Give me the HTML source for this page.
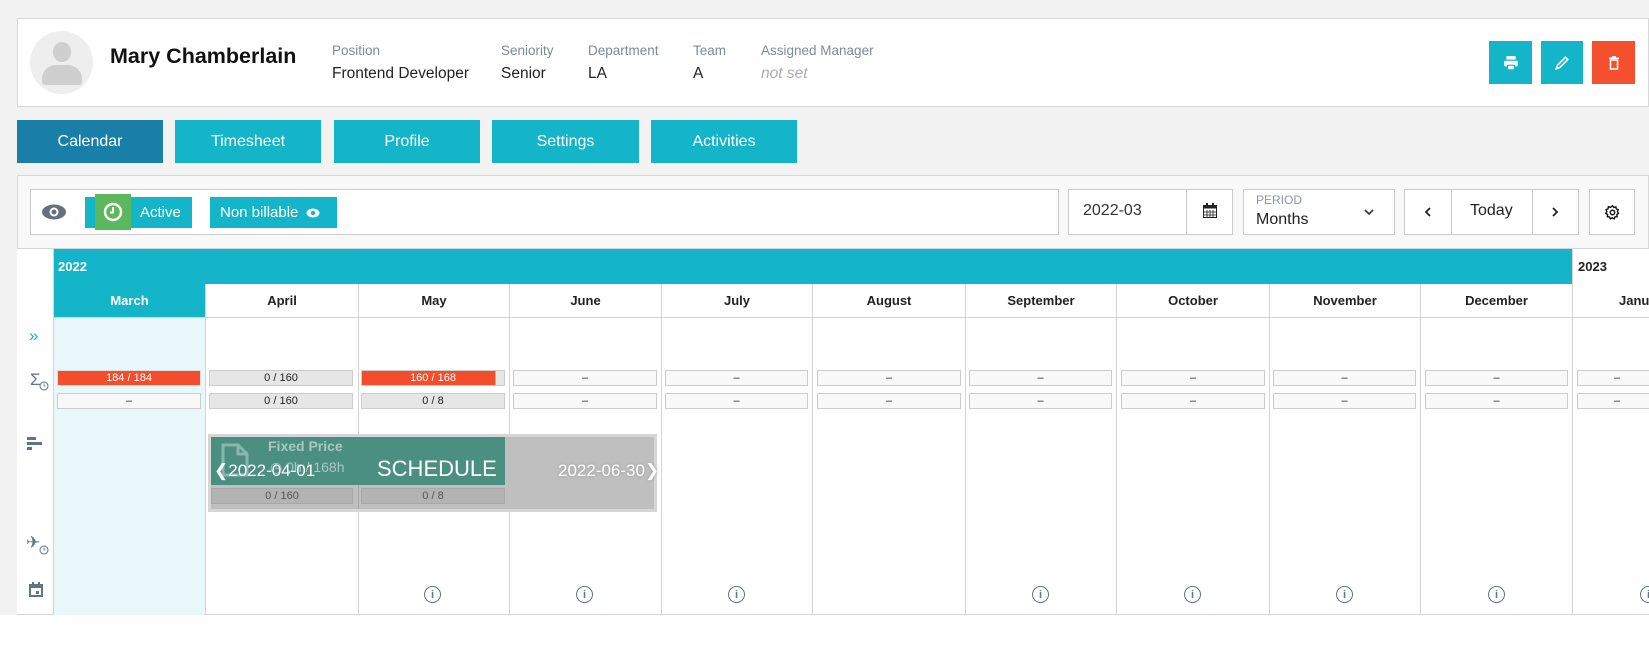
<!DOCTYPE html>
<html><head><meta charset="utf-8"><style>
*{box-sizing:border-box;margin:0;padding:0}
body{width:1649px;height:648px;background:#fff;font-family:"Liberation Sans",sans-serif;position:relative;overflow:hidden;color:#222}
.a{position:absolute}
.btn{position:absolute;color:#fff;font-size:16px;display:flex;align-items:center;justify-content:center;background:#14b5c9}
.lbl{font-size:13.5px;color:#7d8a99}
.val{font-size:15.5px;color:#222}
.box{position:absolute;background:#fff;border:1px solid #ccc}
.col{position:absolute;top:284px;height:331px;border-left:1px solid #d5d5d5}
.mh{position:absolute;top:284px;height:34px;font-size:13px;font-weight:bold;display:flex;align-items:center;justify-content:center;border-left:1px solid #d5d5d5;border-bottom:1px solid #d5d5d5;background:#fff}
.bar{position:absolute;height:16px;font-size:11px;display:flex;align-items:center;justify-content:center;border:1px solid #ccc;background:#f8f8f8;color:#222}
.g{background:#e6e6e6}
.r{background:#f44d2c;color:#fff;border-color:#ddd}
.info{position:absolute;top:586px;width:17px;height:17px;border:1.6px solid #5e7585;border-radius:50%;color:#5e7585;font-size:11px;font-weight:bold;display:flex;align-items:center;justify-content:center}
</style></head><body>
<div class="a" style="left:0;top:0;width:1649px;height:615px;background:#f2f2f2"></div>
<div class="a" style="left:17px;top:18px;width:1632px;height:89px;background:#fff;border:1px solid #d8d8d8"></div>
<div class="a" style="left:30px;top:31px;width:63px;height:63px;border-radius:50%;background:#eee;overflow:hidden">
<div class="a" style="left:23px;top:11px;width:18px;height:20px;border-radius:50%;background:#cfcfcf"></div>
<div class="a" style="left:12px;top:34px;width:40px;height:20px;border-radius:14px 14px 3px 3px;background:#cfcfcf"></div></div>
<div class="a" style="left:110px;top:44px;font-size:21.5px;font-weight:bold;color:#111">Mary Chamberlain</div>
<div class="a lbl" style="left:332px;top:43px">Position</div><div class="a val" style="left:332px;top:65px">Frontend Developer</div>
<div class="a lbl" style="left:501px;top:43px">Seniority</div><div class="a val" style="left:501px;top:65px">Senior</div>
<div class="a lbl" style="left:588px;top:43px">Department</div><div class="a val" style="left:588px;top:65px">LA</div>
<div class="a lbl" style="left:693px;top:43px">Team</div><div class="a val" style="left:693px;top:65px">A</div>
<div class="a lbl" style="left:761px;top:43px">Assigned Manager</div><div class="a val" style="left:761px;top:65px;color:#aab;font-style:italic">not set</div>
<div class="btn" style="left:1489px;top:41px;width:43px;height:43px"><svg width="16" height="16" viewBox="0 0 14 14"><rect x="3" y="1" width="8" height="3" fill="#fff"/><rect x="1" y="5" width="12" height="5" rx="1" fill="#fff"/><rect x="4" y="9" width="6" height="4" fill="#fff" stroke="#14b5c9" stroke-width="1"/></svg></div>
<div class="btn" style="left:1541px;top:41px;width:42px;height:43px"><svg width="16" height="16" viewBox="0 0 14 14"><path d="M2 12 L3 9 L10 2 L12 4 L5 11 Z" fill="none" stroke="#fff" stroke-width="1.4"/></svg></div>
<div class="btn" style="left:1592px;top:41px;width:43px;height:43px;background:#f4502e"><svg width="12" height="16" viewBox="0 0 12 14"><rect x="1" y="1.5" width="10" height="1.5" fill="#fff"/><rect x="4" y="0" width="4" height="1.5" fill="#fff"/><rect x="2.5" y="4" width="7" height="9" fill="none" stroke="#fff" stroke-width="1.5"/></svg></div>
<div class="btn" style="left:17px;top:120px;width:146px;height:43px;background:#1a7fa8">Calendar</div>
<div class="btn" style="left:175px;top:120px;width:146px;height:43px">Timesheet</div>
<div class="btn" style="left:334px;top:120px;width:146px;height:43px">Profile</div>
<div class="btn" style="left:492px;top:120px;width:147px;height:43px">Settings</div>
<div class="btn" style="left:651px;top:120px;width:146px;height:43px">Activities</div>
<div class="a" style="left:17px;top:175px;width:1632px;height:440px;background:#f8f8f8;border:1px solid #d8d8d8"></div>
<div class="box" style="left:30px;top:189px;width:1029px;height:46px"></div>
<svg class="a" style="left:41px;top:204px" width="26" height="16" viewBox="0 0 26 16"><ellipse cx="13" cy="8" rx="12" ry="7.5" fill="#66717d"/><circle cx="13" cy="8" r="4.5" fill="#fff"/><circle cx="13" cy="8" r="2.5" fill="#66717d"/></svg>
<div class="btn" style="left:85px;top:197px;width:107px;height:31px;justify-content:flex-start;padding-left:55px;font-size:15px">Active</div>
<div class="a" style="left:95px;top:194px;width:36px;height:36px;background:#5cb85c;display:flex;align-items:center;justify-content:center"><svg width="20" height="20" viewBox="0 0 20 20"><circle cx="10" cy="10" r="8" fill="none" stroke="#fff" stroke-width="2.4"/><path d="M10 5V10.5H7" fill="none" stroke="#fff" stroke-width="2"/></svg></div>
<div class="btn" style="left:210px;top:197px;width:127px;height:31px;font-size:15px;justify-content:flex-start;padding-left:10px">Non billable<svg style="margin-left:8px" width="14" height="10" viewBox="0 0 14 10"><ellipse cx="7" cy="5" rx="6.5" ry="4.5" fill="#fff"/><circle cx="7" cy="5" r="2.2" fill="#14b5c9"/></svg></div>
<div class="box" style="left:1068px;top:189px;width:165px;height:46px"></div>
<div class="a" style="left:1186px;top:189px;width:1px;height:46px;background:#ccc"></div>
<div class="a" style="left:1083px;top:202px;font-size:16px;color:#333">2022-03</div>
<svg class="a" style="left:1203px;top:203px" width="14" height="15" viewBox="0 0 14 15"><rect x="0.5" y="2.5" width="13" height="12" fill="none" stroke="#222"/><rect x="0.5" y="2.5" width="13" height="3" fill="#222"/><path d="M4 7V14M7 7V14M10 7V14M1 9H13M1 12H13" stroke="#222" stroke-width="0.8"/><rect x="3" y="0" width="2" height="4" fill="#222"/><rect x="9" y="0" width="2" height="4" fill="#222"/></svg>
<div class="box" style="left:1243px;top:189px;width:152px;height:46px"></div>
<div class="a" style="left:1256px;top:193px;font-size:12px;color:#8a96a3">PERIOD</div>
<div class="a" style="left:1256px;top:211px;font-size:16px;color:#222">Months</div>
<svg class="a" style="left:1364px;top:209px" width="10" height="7" viewBox="0 0 10 7"><path d="M1 1L5 5L9 1" fill="none" stroke="#333" stroke-width="1.6"/></svg>
<div class="box" style="left:1404px;top:189px;width:175px;height:46px"></div>
<div class="a" style="left:1451px;top:189px;width:1px;height:46px;background:#ccc"></div>
<div class="a" style="left:1532px;top:189px;width:1px;height:46px;background:#ccc"></div>
<svg class="a" style="left:1424px;top:207px" width="7" height="10"><path d="M6 1L2 5L6 9" fill="none" stroke="#222" stroke-width="1.8"/></svg>
<div class="a" style="left:1470px;top:202px;font-size:16px">Today</div>
<svg class="a" style="left:1552px;top:207px" width="7" height="10"><path d="M1 1L5 5L1 9" fill="none" stroke="#222" stroke-width="1.8"/></svg>
<div class="box" style="left:1589px;top:189px;width:46px;height:46px;display:flex;align-items:center;justify-content:center"><svg width="15" height="15" viewBox="0 0 16 16"><path d="M8 0.8l1.4 1.8 2.2-.6.4 2.2 2.1.9-.9 2.1 1.2 1.8-1.8 1.2.3 2.3-2.3.2-.9 2.1-2-1.1-2 1.1-.9-2.1-2.3-.2.3-2.3L.8 8.9l1.2-1.8-.9-2.1 2.1-.9.4-2.2 2.2.6z" fill="none" stroke="#111" stroke-width="1.5"/><circle cx="8" cy="8" r="2.4" fill="none" stroke="#111" stroke-width="1.5"/></svg></div>
<div class="a" style="left:17px;top:248px;width:1632px;height:367px;background:#fff;border-top:1px solid #d5d5d5;border-bottom:1px solid #d5d5d5"></div>
<div class="a" style="left:54px;top:249px;width:1518px;height:35px;background:#14b5c9;color:#fff;font-size:13px;font-weight:bold;padding:10px 0 0 4px">2022</div>
<div class="a" style="left:1572px;top:249px;width:77px;height:35px;font-size:13px;font-weight:bold;padding:10px 0 0 5px;border-left:1px solid #d5d5d5">2023</div>
<div class="a" style="left:54px;top:318px;width:151px;height:297px;background:#e8f7f9"></div>
<div class="col" style="left:53px;top:249px;height:366px"></div>
<div class="col" style="left:205px"></div><div class="col" style="left:358px"></div><div class="col" style="left:509px"></div><div class="col" style="left:661px"></div><div class="col" style="left:812px"></div><div class="col" style="left:965px"></div><div class="col" style="left:1116px"></div><div class="col" style="left:1269px"></div><div class="col" style="left:1420px"></div><div class="col" style="left:1572px"></div>
<div class="mh" style="left:54px;width:151px;background:#14b5c9;color:#fff;border-left:none">March</div>
<div class="mh" style="left:205px;width:153px">April</div>
<div class="mh" style="left:358px;width:151px">May</div>
<div class="mh" style="left:509px;width:152px">June</div>
<div class="mh" style="left:661px;width:151px">July</div>
<div class="mh" style="left:812px;width:153px">August</div>
<div class="mh" style="left:965px;width:151px">September</div>
<div class="mh" style="left:1116px;width:153px">October</div>
<div class="mh" style="left:1269px;width:151px">November</div>
<div class="mh" style="left:1420px;width:152px">December</div>
<div class="mh" style="left:1572px;width:77px;justify-content:flex-start;padding-left:46px;overflow:hidden">January</div>
<div class="a" style="left:29px;top:326px;color:#14b5c9;font-size:17px">»</div>
<div class="a" style="left:30px;top:370px;color:#5e7585;font-size:17px">Σ</div>
<svg class="a" style="left:39px;top:381px" width="10" height="10"><circle cx="5" cy="5" r="4" fill="#fff" stroke="#5e7585"/><path d="M5 2.5V5H6.5" fill="none" stroke="#5e7585" stroke-width=".8"/></svg>
<svg class="a" style="left:27px;top:437px" width="16" height="14"><rect x="0" y="0" width="9" height="3" fill="#5e7585"/><rect x="0" y="5" width="15" height="3" fill="#5e7585"/><rect x="0" y="10" width="5" height="3" fill="#5e7585"/></svg>
<div class="a" style="left:26px;top:533px;color:#5e7585;font-size:17px">✈</div>
<svg class="a" style="left:39px;top:545px" width="10" height="10"><circle cx="5" cy="5" r="4" fill="#fff" stroke="#5e7585"/><path d="M5 2.5V5H6.5" fill="none" stroke="#5e7585" stroke-width=".8"/></svg>
<svg class="a" style="left:29px;top:582px" width="14" height="15"><rect x="1" y="3" width="12" height="11" fill="none" stroke="#5e7585" stroke-width="2"/><rect x="1" y="3" width="12" height="3" fill="#5e7585"/><rect x="3" y="0" width="2" height="4" fill="#5e7585"/><rect x="9" y="0" width="2" height="4" fill="#5e7585"/><rect x="7" y="9" width="3" height="3" fill="#5e7585"/></svg>
<div class="bar r" style="left:57px;top:370px;width:144px">184 / 184</div>
<div class="bar" style="left:57px;top:393px;width:144px">–</div>
<div class="bar g" style="left:209px;top:370px;width:144px">0 / 160</div>
<div class="bar g" style="left:209px;top:393px;width:144px">0 / 160</div>
<div class="bar g" style="left:361px;top:370px;width:144px;background:linear-gradient(90deg,#f44d2c 94%,#e6e6e6 94%);color:#fff">160 / 168</div>
<div class="bar g" style="left:361px;top:393px;width:144px">0 / 8</div>
<div class="bar" style="left:513px;top:370px;width:144px">–</div><div class="bar" style="left:513px;top:393px;width:144px">–</div>
<div class="bar" style="left:665px;top:370px;width:143px">–</div><div class="bar" style="left:665px;top:393px;width:143px">–</div>
<div class="bar" style="left:817px;top:370px;width:144px">–</div><div class="bar" style="left:817px;top:393px;width:144px">–</div>
<div class="bar" style="left:969px;top:370px;width:143px">–</div><div class="bar" style="left:969px;top:393px;width:143px">–</div>
<div class="bar" style="left:1121px;top:370px;width:144px">–</div><div class="bar" style="left:1121px;top:393px;width:144px">–</div>
<div class="bar" style="left:1273px;top:370px;width:143px">–</div><div class="bar" style="left:1273px;top:393px;width:143px">–</div>
<div class="bar" style="left:1425px;top:370px;width:143px">–</div><div class="bar" style="left:1425px;top:393px;width:143px">–</div>
<div class="bar" style="left:1577px;top:370px;width:80px">–</div><div class="bar" style="left:1577px;top:393px;width:80px">–</div>
<div class="a" style="left:208px;top:434px;width:449px;height:78px;background:#bfbfbf;border:3px solid #d6d6d6"></div>
<div class="a" style="left:358px;top:485px;width:1px;height:24px;background:#a8a8a8"></div>
<div class="a" style="left:211px;top:437px;width:294px;height:48px;background:#4a8f80"></div>
<svg class="a" style="left:221px;top:443px" width="28" height="34"><path d="M2 2H17L26 11V32H2Z" fill="none" stroke="#8ab5ab" stroke-width="3"/><path d="M17 2V11H26" fill="none" stroke="#8ab5ab" stroke-width="3"/></svg>
<div class="a" style="left:268px;top:438px;font-size:14px;font-weight:bold;color:#a9c8c1">Fixed Price</div>
<div class="a" style="left:270px;top:459px;font-size:14px;color:#a9c8c1">◷ 0h / 168h</div>
<div class="a" style="left:214px;top:461px;font-size:17px;color:#fff">❮2022-04-01</div>
<div class="a" style="left:377px;top:456px;font-size:22px;color:#fff">SCHEDULE</div>
<div class="a" style="left:558px;top:461px;font-size:17px;color:#fff;text-shadow:0 0 3px #999">2022-06-30❯</div>
<div class="bar" style="left:211px;top:488px;width:142px;background:#b3b3b3;border-color:#a8a8a8;color:#555">0 / 160</div>
<div class="bar" style="left:361px;top:488px;width:144px;background:#b3b3b3;border-color:#a8a8a8;color:#555">0 / 8</div>
<div class="info" style="left:424px">i</div><div class="info" style="left:576px">i</div><div class="info" style="left:728px">i</div>
<div class="info" style="left:1032px">i</div><div class="info" style="left:1184px">i</div><div class="info" style="left:1336px">i</div><div class="info" style="left:1488px">i</div><div class="info" style="left:1640px">i</div>
</body></html>
